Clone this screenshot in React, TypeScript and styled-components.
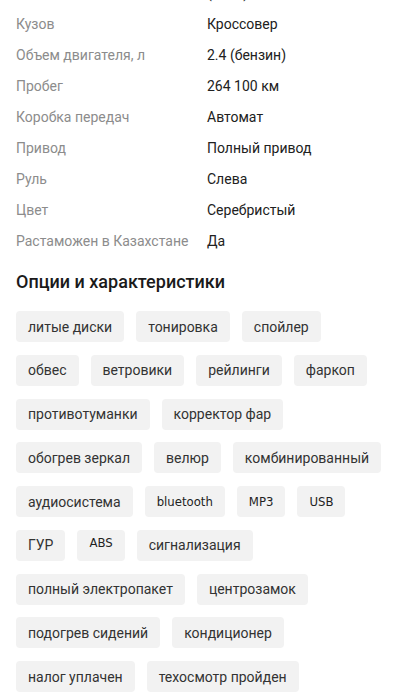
import React from "react";
import styled, { createGlobalStyle } from "styled-components";

const Global = createGlobalStyle`
  html, body { margin: 0; padding: 0; background: #fff; }
  body { font-family: Roboto, "Noto Sans", sans-serif; overflow: hidden; }
`;

const Page = styled.div`
  width: 405px;
  height: 700px;
  overflow: hidden;
  background: #fff;
`;

const Specs = styled.div`
  margin-top: -22px;
  display: flex;
  flex-direction: column;
`;

const SpecRow = styled.div`
  display: grid;
  grid-template-columns: 191px 1fr;
  padding-left: 16px;
  height: 31px;
  align-items: center;
  font-size: 14px;
  line-height: 17px;
`;

const Label = styled.span`
  color: #8c8c8c;
  white-space: nowrap;
`;

const Value = styled.span`
  color: #212121;
  white-space: nowrap;
`;

const Heading = styled.h2`
  margin: 13px 0 0 16px;
  font-size: 18px;
  line-height: 24px;
  font-weight: 500;
  color: #1a1a1a;
`;

const Chips = styled.div`
  display: flex;
  flex-wrap: wrap;
  gap: 12.75px 12px;
  padding: 17px 16px 0 16px;
`;

const Chip = styled.div<{ $latin?: boolean; $raised?: boolean }>`
  height: 31px;
  padding: 0 12px;
  display: flex;
  align-items: ${(p) => (p.$raised ? "flex-start" : "center")};
  padding-top: ${(p) => (p.$raised ? "5px" : "0")};
  box-sizing: border-box;
  background: #f2f2f2;
  border-radius: 4px;
  color: ${(p) => (p.$latin ? "#222" : "#333")};
  font-size: ${(p) => (p.$latin ? "13px" : "14px")};
  font-family: ${(p) =>
    p.$latin
      ? '"DejaVu Sans Condensed", "DejaVu Sans", sans-serif'
      : 'Roboto, "Noto Sans", sans-serif'};
  font-stretch: ${(p) => (p.$latin ? "condensed" : "normal")};
  white-space: nowrap;
`;

const specs: [string, string][] = [
  ["", "(2008)"],
  ["Кузов", "Кроссовер"],
  ["Объем двигателя, л", "2.4 (бензин)"],
  ["Пробег", "264 100 км"],
  ["Коробка передач", "Автомат"],
  ["Привод", "Полный привод"],
  ["Руль", "Слева"],
  ["Цвет", "Серебристый"],
  ["Растаможен в Казахстане", "Да"],
];

const options: { t: string; latin?: boolean; raised?: boolean }[] = [
  { t: "литые диски" },
  { t: "тонировка" },
  { t: "спойлер" },
  { t: "обвес" },
  { t: "ветровики" },
  { t: "рейлинги" },
  { t: "фаркоп" },
  { t: "противотуманки" },
  { t: "корректор фар" },
  { t: "обогрев зеркал" },
  { t: "велюр" },
  { t: "комбинированный" },
  { t: "аудиосистема" },
  { t: "bluetooth", latin: true },
  { t: "MP3", latin: true },
  { t: "USB", latin: true },
  { t: "ГУР" },
  { t: "ABS", latin: true, raised: true },
  { t: "сигнализация" },
  { t: "полный электропакет" },
  { t: "центрозамок" },
  { t: "подогрев сидений" },
  { t: "кондиционер" },
  { t: "налог уплачен" },
  { t: "техосмотр пройден" },
];

export default function App() {
  return (
    <Page>
      <Global />
      <Specs>
        {specs.map(([l, v], i) => (
          <SpecRow key={i}>
            <Label>{l}</Label>
            <Value>{v}</Value>
          </SpecRow>
        ))}
      </Specs>
      <Heading>Опции и характеристики</Heading>
      <Chips>
        {options.map((o) => (
          <Chip key={o.t} $latin={o.latin} $raised={o.raised}>
            {o.t}
          </Chip>
        ))}
      </Chips>
    </Page>
  );
}
